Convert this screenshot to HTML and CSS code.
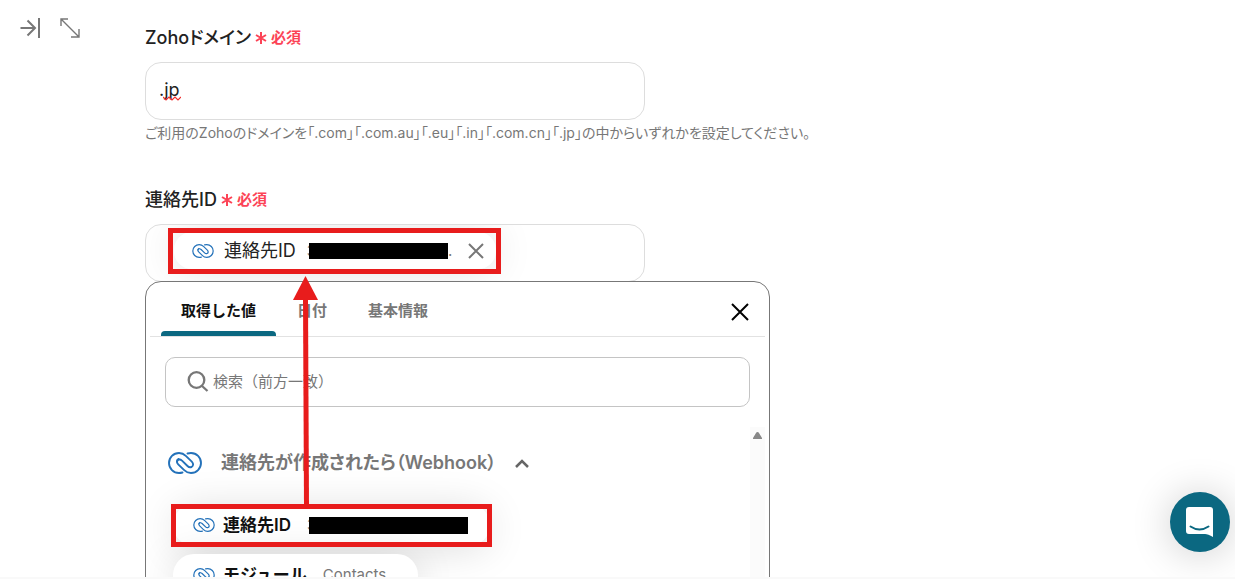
FILE: index.html
```html
<!DOCTYPE html>
<html lang="ja">
<head>
<meta charset="utf-8">
<meta name="viewport" content="width=device-width, initial-scale=1">
<title>Zoho</title>
<link rel="stylesheet" href="styles.css">
</head>
<body>
<svg class="defs" aria-hidden="true">
  <symbol id="crm" viewBox="0 0 34 22">
    <g fill="none" stroke="#2472ba" stroke-width="1.900" stroke-linecap="round" stroke-linejoin="round">
      <path d="M14.500 20.500C13.400 20.800 12.300 21 11 21A10 10 0 0 1 11 1C14 1 16.200 2.200 17.800 3.800L23.800 9.600C25.800 11.600 25.400 14.200 23.400 15C21.900 15.600 20.500 15 19.500 14L14 8.600C12 6.800 9.600 7.200 9.200 9.200"/>
      <path d="M19.500 1.500C20.600 1.200 21.700 1 23 1A10 10 0 0 1 23 21C20 21 17.800 19.800 16.200 18.200L10.200 12.400C8.200 10.400 8.600 7.800 10.600 7"/>
    </g>
  </symbol>
</svg>
<div class="page">
  <nav class="tools">
    <button class="icon-btn" aria-label="閉じる"><svg width="22" height="22" viewBox="0 0 22 22" fill="none" stroke="#777" stroke-width="2"><path d="M0.500 11H15M7.500 3.500L15 11L7.500 18.500M19 1V21"/></svg></button>
    <button class="icon-btn" aria-label="拡大"><svg width="20" height="22" viewBox="0 0 20 22" fill="none" stroke="#777" stroke-width="1.400"><path d="M1 2L19 20M1 9V2H8M19 12V20H11"/></svg></button>
  </nav>
  <main class="form">
    <section class="field">
      <label class="label" for="domain">Zohoドメイン <span class="required"><svg width="12" height="12" viewBox="0 0 12 12" stroke="#fc4356" stroke-width="2"><path d="M6 0V12M1 3L11 9M11 3L1 9"/></svg>必須</span></label>
      <div class="input-wrap">
        <input class="box" id="domain" type="text" value=".jp">
        <svg class="squiggle" width="18" height="5" viewBox="0 0 18 5" fill="none" stroke="#f02b2b" stroke-width="1.200"><path d="M0 1L3 4L6 1L9 4L12 1L15 4L18 1"/></svg>
      </div>
      <p class="help">ご利用のZohoのドメインを「.com」「.com.au」「.eu」「.in」「.com.cn」「.jp」の中からいずれかを設定してください。</p>
    </section>
    <section class="field contact">
      <div class="label">連絡先ID <span class="required"><svg width="12" height="12" viewBox="0 0 12 12" stroke="#fc4356" stroke-width="2"><path d="M6 0V12M1 3L11 9M11 3L1 9"/></svg>必須</span></div>
      <div class="box tokens">
        <div class="chip">
          <svg class="crm-small"><use href="#crm"/></svg>
          <span class="chip-name">連絡先ID</span>
          <span class="value"><span>3</span><span class="redacted"></span><span>.</span></span>
          <button class="icon-btn" aria-label="削除"><svg width="16" height="16" viewBox="0 0 16 16" stroke="#777" stroke-width="2"><path d="M1 1L15 15M15 1L1 15"/></svg></button>
        </div>
      </div>
      <div class="popover">
        <div class="tabs">
          <button class="tab active">取得した値</button>
          <button class="tab">日付</button>
          <button class="tab">基本情報</button>
          <button class="icon-btn close" aria-label="閉じる"><svg width="18" height="18" viewBox="0 0 18 18" stroke="#000" stroke-width="2"><path d="M1 1L17 17M17 1L1 17"/></svg></button>
        </div>
        <div class="search">
          <svg width="22" height="22" viewBox="0 0 22 22" fill="none" stroke="#777" stroke-width="2.300"><circle cx="9.500" cy="9" r="7.800"/><path d="M15 15L20.500 20"/></svg>
          <input type="search" aria-label="検索" placeholder="検索（前方一致）">
        </div>
        <div class="results">
          <div class="list">
            <button class="group"><svg class="crm-large"><use href="#crm"/></svg><span>連絡先が作成されたら（Webhook）</span><svg width="14" height="9" viewBox="0 0 14 9" fill="none" stroke="#666" stroke-width="2.500"><path d="M1 8L7 2L13 8"/></svg></button>
            <button class="item"><svg class="crm-small"><use href="#crm"/></svg><span>連絡先ID</span><span class="value"><span>3</span><span class="redacted wide"></span></span></button>
            <button class="item second"><svg class="crm-small"><use href="#crm"/></svg><span>モジュール</span><span class="value">Contacts</span></button>
          </div>
          <div class="scrollbar"><svg width="9" height="8" viewBox="0 0 9 8"><path d="M4.500 0Q5.500 0 6 1L9 6V7H0V6L3 1Q3.500 0 4.500 0Z" fill="#888"/></svg></div>
        </div>
      </div>
      <svg class="marks" width="360" height="330" viewBox="0 0 360 330" fill="none" stroke="#e81c1c" stroke-width="5">
        <rect x="25.500" y="6.500" width="328" height="41"/>
        <rect x="28.500" y="282.500" width="316" height="38"/>
        <path d="M161.500 282L160.500 74"/>
        <path d="M160.500 52L173 76H148Z" fill="#e81c1c" stroke="none"/>
      </svg>
    </section>
  </main>
  <button class="chat" aria-label="チャット"><svg width="28" height="31" viewBox="0 0 28 31"><path d="M3 0H24Q27 0 27 3V30Q22 27 19 27H3Q0 27 0 24V3Q0 0 3 0Z" fill="#fff"/><path d="M4.500 19.500Q13.500 25.500 22.500 19.500" fill="none" stroke="#0b6881" stroke-width="2" stroke-linecap="round"/></svg></button>
</div>
</body>
</html>
```
FILE: styles.css
```css
* { box-sizing: border-box; }
body {
  margin: 0;
  background: #fff;
  color: #222;
  font: 500 16px/24px Inter, "Noto Sans CJK JP", sans-serif;
  font-feature-settings: "palt";
}
button, input { font: inherit; color: inherit; font-feature-settings: inherit; }
button { background: none; border: 0; padding: 0; text-align: left; }
svg { flex: none; }
.defs { position: absolute; width: 0; height: 0; }
.page {
  position: relative;
  display: flex;
  height: 100vh;
  overflow: hidden;
  border-bottom: 2px solid #f9f9f9;
}
.tools { display: flex; align-items: flex-start; gap: 18px; width: 145px; padding: 17px 0 0 20px; flex: none; }
.icon-btn { display: flex; }
.form { flex: 1; min-width: 0; padding-top: 25px; }
.label { display: flex; align-items: center; gap: 4px; height: 26px; font-size: 18px; }
.required { display: inline-flex; align-items: center; gap: 4px; color: #fc4356; font-size: 15px; font-weight: 700; }
.input-wrap { position: relative; max-width: 500px; margin-top: 11px; }
.box {
  display: block;
  width: 100%;
  max-width: 500px;
  height: 58px;
  border: 1px solid #ddd;
  border-radius: 16px;
  padding: 0 13px 3px;
  background: #fff;
  font-size: 18px;
  font-weight: 400;
}
.squiggle { position: absolute; left: 18px; top: 34px; }
.help { margin: 0; padding-top: 1px; color: #777; font-size: 14px; font-weight: 400; }
.contact { position: relative; margin-top: 42px; }
.tokens { display: flex; align-items: flex-start; margin-top: 11px; padding: 7px 28px; overflow: hidden; }
.chip {
  display: flex;
  align-items: center;
  height: 37px;
  padding: 0 12px 0 18px;
  border-radius: 18px;
  background: #fff;
  box-shadow: 0 0 40px #0002;
  font-size: 18px;
}
.crm-small { width: 22px; height: 14px; }
.crm-large { width: 34px; height: 22px; }
.chip-name { margin-left: 10px; }
.value { display: flex; align-items: center; font-weight: 400; font-size: 15px; color: #777; }
.chip .value { margin: 0 16px 0 11px; }
.redacted { position: relative; width: 139px; height: 16px; margin-left: -7px; background: #000; }
.wide { width: 159px; height: 17px; }
.popover {
  position: absolute;
  left: 0;
  top: 94px;
  width: 625px;
  height: 400px;
  border: 1px solid #777;
  border-radius: 16px;
  background: #fff;
  box-shadow: 0 160px 30px -30px #0001;
  overflow: hidden;
}
.tabs { display: flex; gap: 1px; height: 55px; margin: 0 4px; padding: 0 16px 0 11px; border-bottom: 1px solid #e2e2e2; font-size: 15px; font-feature-settings: normal; }
.tab { display: flex; padding: 17px 20px 0; color: #777; font-weight: 700; }
.active { color: #111; position: relative; }
.active::after { content: ""; position: absolute; left: 0; right: 0; bottom: 0; height: 5px; border-radius: 4px 4px 0 0; background: #0b6881; }
.close { margin-left: auto; align-items: center; padding-top: 5px; }
.search { display: flex; align-items: center; gap: 4px; height: 50px; margin: 20px 19px 0; padding: 0 21px; border: 1px solid #c4c4c4; border-radius: 10px; }
.search input { flex: 1; border: 0; outline: 0; padding: 0; background: none; font-size: 15px; font-weight: 400; font-feature-settings: normal; }
.search input::placeholder { color: #777; opacity: 1; }
.results { display: flex; margin-top: 20px; }
.list { flex: 1; height: 260px; padding: 21px 22px; display: flex; flex-direction: column; align-items: flex-start; overflow: hidden; }
.group { display: flex; align-items: center; gap: 19px; height: 30px; color: #777; font-size: 18px; font-weight: 600; margin-bottom: 26px; }
.item { display: flex; align-items: center; height: 42px; gap: 8px; margin-left: 5px; padding: 0 22px 0 20px; border-radius: 22px; background: #fff; box-shadow: 0 4px 40px #0002; font-size: 17px; font-weight: 600; font-feature-settings: normal; color: #111; }
.item .value { margin-left: 8px; }
.second { margin-top: 8px; padding-right: 32px; }
.scrollbar { display: flex; justify-content: center; width: 15px; margin-right: 4px; padding-top: 5px; background: #fbfbfb; }
.marks { position: absolute; left: 0; top: 37px; }
.chat {
  position: absolute;
  right: 5px;
  bottom: 25px;
  display: flex;
  align-items: center;
  justify-content: center;
  width: 60px;
  height: 60px;
  border-radius: 50%;
  background: #0b6881;
  box-shadow: 0 2px 40px #0003;
}
```
